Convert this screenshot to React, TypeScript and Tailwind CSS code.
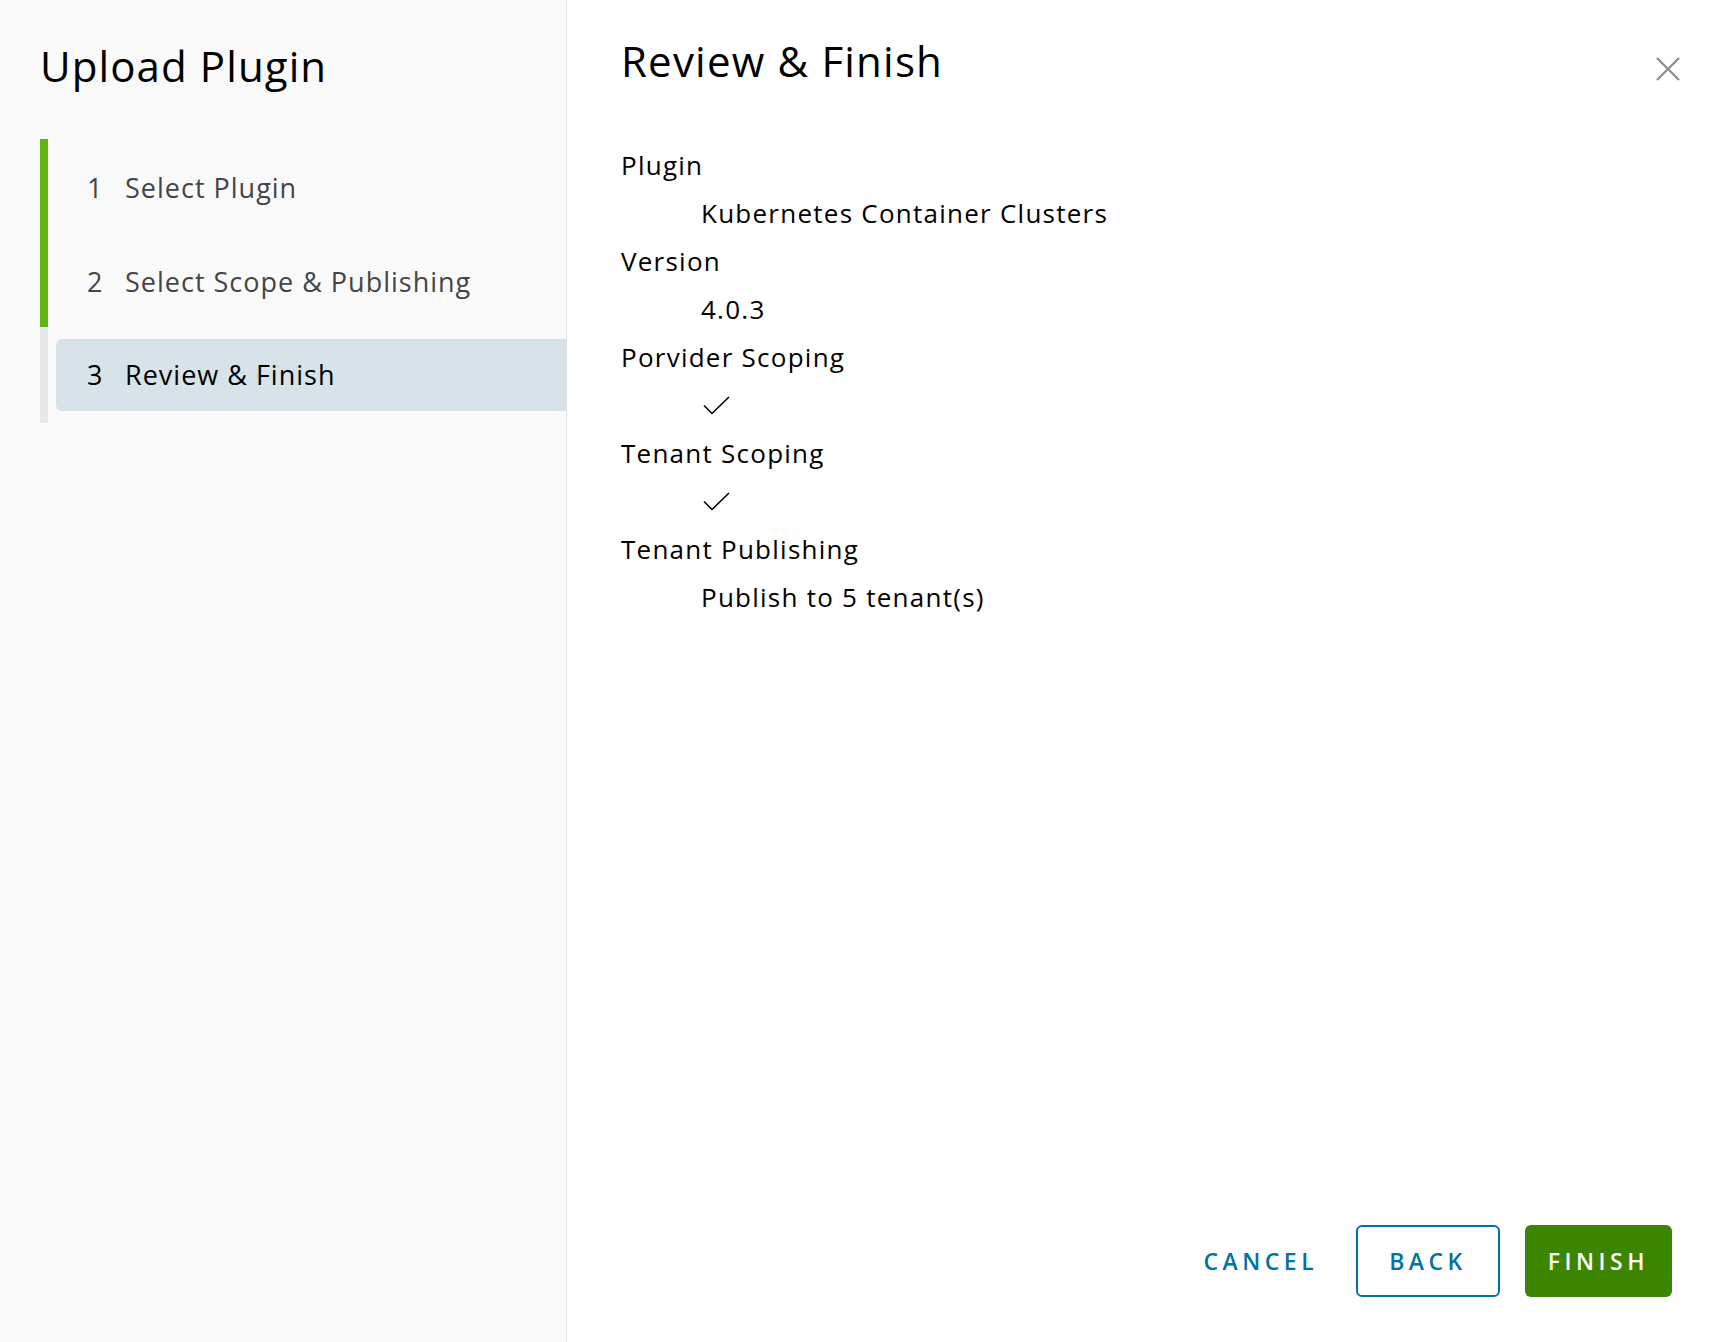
type Step = {
  num: number
  label: string
  state: 'done' | 'current'
  pad: string
}

const steps: Step[] = [
  { num: 1, label: 'Select Plugin', state: 'done', pad: 'pt-[13px] pb-[11px]' },
  { num: 2, label: 'Select Scope & Publishing', state: 'done', pad: 'pt-[11px] pb-[9px]' },
  { num: 3, label: 'Review & Finish', state: 'current', pad: 'pt-[12px] pb-[12px]' },
]

type Row = {
  label: string
  value: string | 'check'
}

const rows: Row[] = [
  { label: 'Plugin', value: 'Kubernetes Container Clusters' },
  { label: 'Version', value: '4.0.3' },
  { label: 'Porvider Scoping', value: 'check' },
  { label: 'Tenant Scoping', value: 'check' },
  { label: 'Tenant Publishing', value: 'Publish to 5 tenant(s)' },
]

function CheckMark() {
  return (
    <svg width="27" height="19" viewBox="0 0 27 19" fill="none" className="ml-[2px]">
      <polyline points="1,9.5 9,17.5 26,1" stroke="#000" strokeWidth="1.6" />
    </svg>
  )
}

function CloseIcon() {
  return (
    <svg width="24" height="24" viewBox="0 0 24 24" fill="none">
      <path d="M1 1L23 23M23 1L1 23" stroke="#8c8c8c" strokeWidth="2.2" />
    </svg>
  )
}

function StepItem({ step }: { step: Step }) {
  const current = step.state === 'current'
  return (
    <div
      className={`border-l-8 pl-2 ${step.pad} ${
        step.state === 'done' ? 'border-[#60b515]' : 'border-[#e8e8e8]'
      }`}
    >
      <div
        className={`flex h-[72px] items-center rounded-l-[6px] pl-[31px] text-[27px] tracking-[1px] ${
          current ? 'bg-[#d8e3e9] font-medium text-black' : 'text-[#454545]'
        }`}
      >
        <span className="w-[38px]">{step.num}</span>
        <span>{step.label}</span>
      </div>
    </div>
  )
}

export default function App() {
  return (
    <div className="flex h-[1342px] w-full bg-white font-['Open_Sans','Liberation_Sans',sans-serif] text-black">
      <aside className="w-[567px] shrink-0 border-r border-[#e0e0e0] bg-[#fafafa] pl-10 pt-[38px]">
        <h1 className="text-[42px] leading-[56px] font-normal tracking-[1.1px]">Upload Plugin</h1>
        <nav className="mt-[45px]">
          {steps.map((step) => (
            <StepItem key={step.num} step={step} />
          ))}
        </nav>
      </aside>

      <main className="flex flex-1 flex-col pl-[54px] pr-[36px] pt-[33px] pb-[45px]">
        <div className="flex items-start justify-between">
          <h2 className="text-[42px] leading-[56px] font-normal tracking-[1.2px]">Review &amp; Finish</h2>
          <button className="mt-[24px]" aria-label="Close">
            <CloseIcon />
          </button>
        </div>

        <dl className="mt-[52px] text-[26px] leading-[48px] tracking-[1.25px]">
          {rows.map((row) => (
            <div key={row.label}>
              <dt className="h-12">{row.label}</dt>
              <dd className="flex h-12 items-center pl-[80px]">
                {row.value === 'check' ? <CheckMark /> : row.value}
              </dd>
            </div>
          ))}
        </dl>

        <div className="mt-auto flex items-center justify-end pr-[8px] text-[23px] font-semibold tracking-[4.5px]">
          <button className="h-[72px] px-[30px] text-[#0072a3]">CANCEL</button>
          <button className="ml-[8px] h-[72px] rounded-[6px] border-2 border-[#0072a3] px-[31px] text-[#0072a3]">
            BACK
          </button>
          <button className="ml-[25px] h-[72px] rounded-[6px] bg-[#3c8500] px-[23px] text-white">
            FINISH
          </button>
        </div>
      </main>
    </div>
  )
}
